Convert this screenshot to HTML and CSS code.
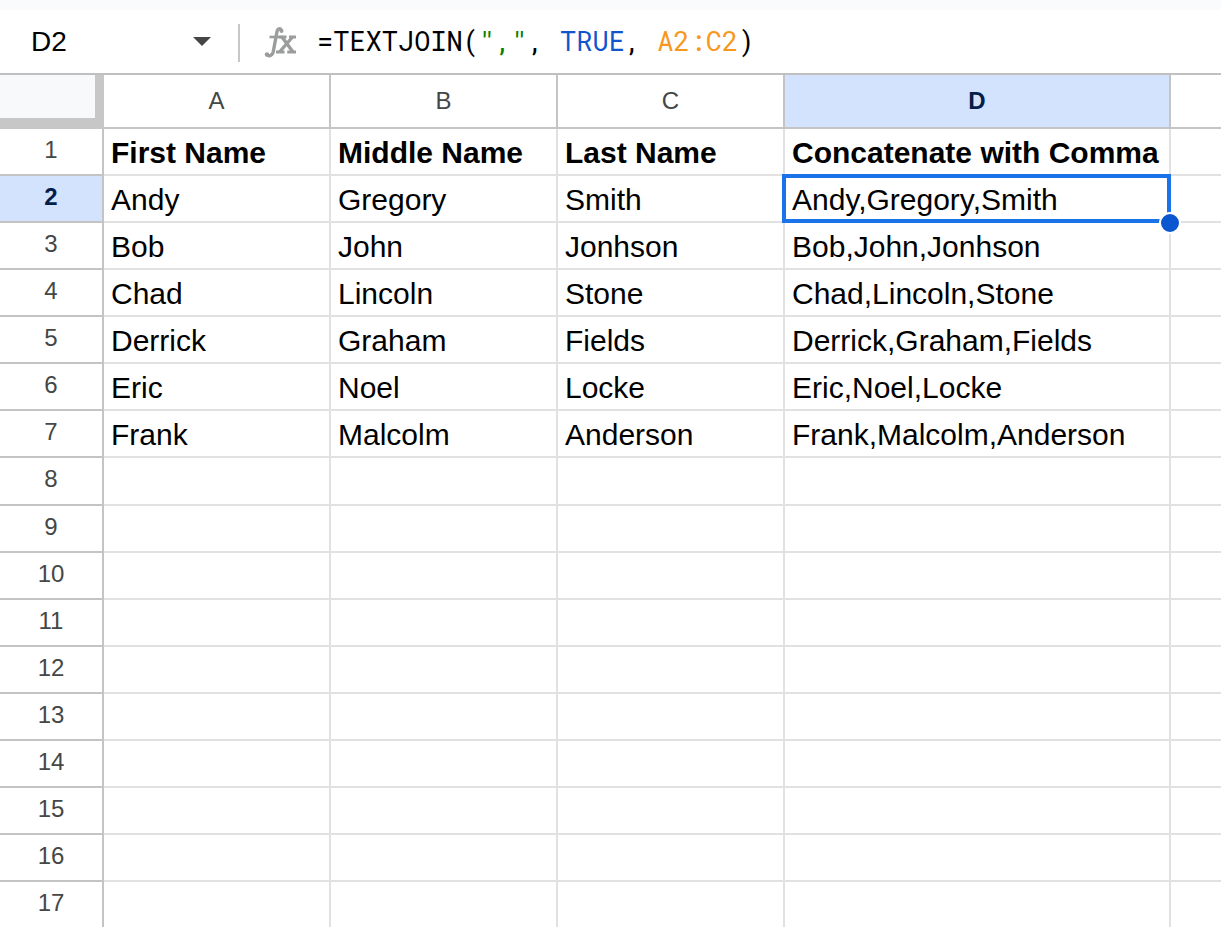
FILE: index.html
```html
<!DOCTYPE html>
<html lang="en">
<head>
    <meta charset="UTF-8">
    <meta name="viewport" content="width=device-width, initial-scale=1.0">
    <title>Concatenate with Comma</title>
    <link rel="stylesheet" href="styles.css">
</head>
<body>
    <header class="formula-bar">
        <div class="name-box">
            <input class="name-input" type="text" value="D2" aria-label="Name box">
            <button class="name-toggle" type="button" aria-label="Named ranges">
                <svg width="18" height="9" viewBox="0 0 18 9"><path d="M0 0h18L9 9z" fill="#444746"/></svg>
            </button>
        </div>
        <svg class="fx-icon" width="33" height="33" viewBox="0 0 33 33" aria-hidden="true">
            <g fill="none" stroke="#9b9d9c" stroke-width="3.400">
                <path d="M17.500 4.500C16.500 1.800 13.600 2.500 12.900 6L9.300 25.500C8.300 30.300 4.500 30.500 3 28.500"/>
                <path d="M5.500 11h13.500" stroke-width="2.600"/>
                <path d="M18 11l11 15M28.500 11L15.500 26"/>
                <path d="M15 11h7.500M25 11h7M12 26h8.500M23.300 26h8.700" stroke-width="2.800"/>
            </g>
            <circle cx="17.500" cy="5" r="2" fill="#9b9d9c"/>
            <circle cx="3" cy="28.500" r="2.300" fill="#9b9d9c"/>
        </svg>
        <div class="formula" role="textbox" contenteditable="true" spellcheck="false" aria-label="Formula">=TEXTJOIN(<span class="string">","</span>, <span class="boolean">TRUE</span>, <span class="range">A2:C2</span>)</div>
    </header>

    <main class="sheet">
        <table class="grid">
            <colgroup>
                <col class="col-index">
                <col class="col-name">
                <col class="col-name">
                <col class="col-name">
                <col class="col-joined">
                <col>
            </colgroup>
            <thead>
                <tr><td class="corner"></td><th scope="col">A</th><th scope="col">B</th><th scope="col">C</th><th scope="col" class="selected">D</th><th></th></tr>
            </thead>
            <tbody>
                <tr class="titles"><th scope="row">1</th><td>First Name</td><td>Middle Name</td><td>Last Name</td><td>Concatenate with Comma</td><td></td></tr>
                <tr><th scope="row" class="selected">2</th><td>Andy</td><td>Gregory</td><td>Smith</td><td class="active">Andy,Gregory,Smith<span class="fill-handle"></span></td><td></td></tr>
                <tr><th scope="row">3</th><td>Bob</td><td>John</td><td>Jonhson</td><td>Bob,John,Jonhson</td><td></td></tr>
                <tr><th scope="row">4</th><td>Chad</td><td>Lincoln</td><td>Stone</td><td>Chad,Lincoln,Stone</td><td></td></tr>
                <tr><th scope="row">5</th><td>Derrick</td><td>Graham</td><td>Fields</td><td>Derrick,Graham,Fields</td><td></td></tr>
                <tr><th scope="row">6</th><td>Eric</td><td>Noel</td><td>Locke</td><td>Eric,Noel,Locke</td><td></td></tr>
                <tr><th scope="row">7</th><td>Frank</td><td>Malcolm</td><td>Anderson</td><td>Frank,Malcolm,Anderson</td><td></td></tr>
                <tr class="tall"><th scope="row">8</th><td></td><td></td><td></td><td></td><td></td></tr>
                <tr><th scope="row">9</th><td></td><td></td><td></td><td></td><td></td></tr>
                <tr><th scope="row">10</th><td></td><td></td><td></td><td></td><td></td></tr>
                <tr><th scope="row">11</th><td></td><td></td><td></td><td></td><td></td></tr>
                <tr><th scope="row">12</th><td></td><td></td><td></td><td></td><td></td></tr>
                <tr><th scope="row">13</th><td></td><td></td><td></td><td></td><td></td></tr>
                <tr><th scope="row">14</th><td></td><td></td><td></td><td></td><td></td></tr>
                <tr><th scope="row">15</th><td></td><td></td><td></td><td></td><td></td></tr>
                <tr><th scope="row">16</th><td></td><td></td><td></td><td></td><td></td></tr>
                <tr><th scope="row">17</th><td></td><td></td><td></td><td></td><td></td></tr>
            </tbody>
        </table>
    </main>
</body>
</html>
```
FILE: styles.css
```css
* {
    box-sizing: border-box;
}
body {
    margin: 0;
    height: 100vh;
    display: flex;
    flex-direction: column;
    overflow: hidden;
    background: #fff;
    color: #000;
    font-family: Arial, "Liberation Sans", sans-serif;
    font-size: 30px;
}

/* Formula bar */
.formula-bar {
    flex: none;
    display: flex;
    align-items: center;
    height: 75px;
    padding-top: 2px;
    border-top: 10px solid #f9fbfd;
    border-bottom: 2px solid #c0c0c0;
}
.name-box {
    display: flex;
    align-items: center;
    width: 240px;
    height: 38px;
    padding: 0 27px 2px 31px;
    border-right: 2px solid #c7c7c7;
}
.name-input {
    flex: 1;
    min-width: 0;
    padding: 0;
    border: 0;
    outline: 0;
    background: none;
    color: inherit;
    font: inherit;
    font-size: 28px;
}
.name-toggle {
    display: flex;
    padding: 0;
    border: 0;
    background: none;
    cursor: pointer;
}
.fx-icon {
    flex: none;
    margin: 0 20px 0 24px;
}
.formula {
    flex: 1;
    padding-bottom: 4px;
    outline: 0;
    white-space: pre;
    font-family: "Roboto Mono", "DejaVu Sans Mono", monospace;
    font-size: 27px;
}
.string {
    color: #008000;
}
.boolean {
    color: #1155cc;
}
.range {
    color: #f7981d;
}

/* Grid */
.sheet {
    flex: 1;
    min-height: 0;
    overflow: hidden;
}
.grid {
    width: 100%;
    table-layout: fixed;
    border-collapse: separate;
    border-spacing: 0;
}
.col-index {
    width: 104px;
}
.col-name {
    width: 227px;
}
.col-joined {
    width: 386px;
}
.grid th {
    padding: 0;
    border-right: 2px solid #c4c4c4;
    border-bottom: 2px solid #c4c4c4;
    color: #444746;
    font-size: 24px;
    font-weight: normal;
}
.grid thead th {
    height: 54px;
}
.grid tbody th {
    height: 47px;
    padding-bottom: 4px;
    line-height: 40px;
}
.grid tbody td {
    padding: 2px 0 0 7px;
    border-right: 2px solid #e1e1e1;
    border-bottom: 2px solid #e1e1e1;
    line-height: 42px;
    white-space: nowrap;
}
.grid .tall th {
    height: 48px;
}
.grid th:last-child,
.grid td:last-child {
    border-right: 0;
}
.grid .selected {
    background: #d3e3fd;
    color: #041e49;
    font-weight: bold;
}
.grid .corner {
    padding: 0;
    background: #f8f9fb;
    border-right: 9px solid #c7c7c7;
    border-bottom: 11px solid #c7c7c7;
}
.titles td {
    font-weight: bold;
}

/* Active cell */
.active {
    position: relative;
}
.active::after {
    content: "";
    position: absolute;
    top: -2px;
    right: -2px;
    bottom: -2px;
    left: -3px;
    border: 4px solid #1a73e8;
}
.fill-handle {
    position: absolute;
    right: -12px;
    bottom: -13px;
    z-index: 1;
    width: 22px;
    height: 22px;
    border: 2px solid #fff;
    border-radius: 50%;
    background: #0b57d0;
    cursor: crosshair;
}
```
